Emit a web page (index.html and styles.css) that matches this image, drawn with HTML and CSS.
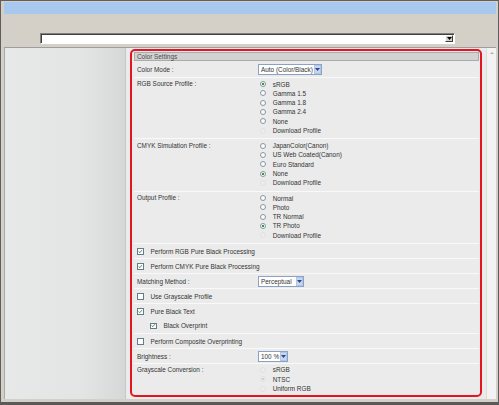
FILE: index.html
```html
<!DOCTYPE html>
<html>
<head>
<meta charset="utf-8">
<link rel="stylesheet" href="styles.css">
</head>
<body>
<div class="window">
  <div class="titlebar"></div>
  <div class="toolbar">
    <div class="bigselect"><span class="bigarrow"><svg width="5" height="3" viewBox="0 0 5 3"><path d="M0 0H5L2.5 3Z" fill="#000"/></svg></span></div>
  </div>
  <div class="main">
    <div class="side"></div>
    <div class="content">
      <div class="panel">
        <div class="panel-head">Color Settings</div>

        <div class="row first">
          <div class="label">Color Mode :</div>
          <div class="value"><span class="sel w64">Auto (Color/Black)<span class="sel-btn"><svg width="5" height="3" viewBox="0 0 5 3"><path d="M0 0H5L2.5 3Z" fill="#2b4a80"/></svg></span></span></div>
        </div>

        <div class="row group g6">
          <div class="label">RGB Source Profile :</div>
          <div class="value list">
            <div class="opt"><span class="rd on"></span>sRGB</div>
            <div class="opt"><span class="rd"></span>Gamma 1.5</div>
            <div class="opt"><span class="rd"></span>Gamma 1.8</div>
            <div class="opt"><span class="rd"></span>Gamma 2.4</div>
            <div class="opt"><span class="rd"></span>None</div>
            <div class="opt"><span class="rd off"></span>Download Profile</div>
          </div>
        </div>

        <div class="row group">
          <div class="label">CMYK Simulation Profile :</div>
          <div class="value list">
            <div class="opt"><span class="rd"></span>JapanColor(Canon)</div>
            <div class="opt"><span class="rd"></span>US Web Coated(Canon)</div>
            <div class="opt"><span class="rd"></span>Euro Standard</div>
            <div class="opt"><span class="rd on"></span>None</div>
            <div class="opt"><span class="rd off"></span>Download Profile</div>
          </div>
        </div>

        <div class="row group">
          <div class="label">Output Profile :</div>
          <div class="value list">
            <div class="opt"><span class="rd"></span>Normal</div>
            <div class="opt"><span class="rd"></span>Photo</div>
            <div class="opt"><span class="rd"></span>TR Normal</div>
            <div class="opt"><span class="rd on"></span>TR Photo</div>
            <div class="opt"><span class="rd off"></span>Download Profile</div>
          </div>
        </div>

        <div class="row single">
          <span class="cb"><svg width="5" height="5" viewBox="0 0 5 5"><path d="M0.6 2.4L2 3.8L4.4 1" fill="none" stroke="#2f9a3c" stroke-width="1.1"/></svg></span>Perform RGB Pure Black Processing
        </div>

        <div class="row single">
          <span class="cb"><svg width="5" height="5" viewBox="0 0 5 5"><path d="M0.6 2.4L2 3.8L4.4 1" fill="none" stroke="#2f9a3c" stroke-width="1.1"/></svg></span>Perform CMYK Pure Black Processing
        </div>

        <div class="row single">
          <div class="label">Matching Method :</div>
          <div class="value"><span class="sel w46">Perceptual<span class="sel-btn"><svg width="5" height="3" viewBox="0 0 5 3"><path d="M0 0H5L2.5 3Z" fill="#2b4a80"/></svg></span></span></div>
        </div>

        <div class="row single">
          <span class="cb"></span>Use Grayscale Profile
        </div>

        <div class="row double">
          <div class="line a"><span class="cb"><svg width="5" height="5" viewBox="0 0 5 5"><path d="M0.6 2.4L2 3.8L4.4 1" fill="none" stroke="#2f9a3c" stroke-width="1.1"/></svg></span>Pure Black Text</div>
          <div class="line b sub"><span class="cb"><svg width="5" height="5" viewBox="0 0 5 5"><path d="M0.6 2.4L2 3.8L4.4 1" fill="none" stroke="#2f9a3c" stroke-width="1.1"/></svg></span>Black Overprint</div>
        </div>

        <div class="row single">
          <span class="cb"></span>Perform Composite Overprinting
        </div>

        <div class="row single">
          <div class="label">Brightness :</div>
          <div class="value"><span class="sel w30">100 %<span class="sel-btn"><svg width="5" height="3" viewBox="0 0 5 3"><path d="M0 0H5L2.5 3Z" fill="#2b4a80"/></svg></span></span></div>
        </div>

        <div class="row group g3">
          <div class="label">Grayscale Conversion :</div>
          <div class="value list">
            <div class="opt"><span class="rd off"></span>sRGB</div>
            <div class="opt"><span class="rd off on-off"></span>NTSC</div>
            <div class="opt"><span class="rd off"></span>Uniform RGB</div>
          </div>
        </div>
      </div>
    </div>
    <div class="scroll"><span class="uparrow"></span></div>
  </div>
</div>
</body>
</html>
```

FILE: styles.css
```css
html, body {
  margin: 0;
  padding: 0;
  background: #d4d0c8;
}
.window {
  width: 499px;
  height: 405px;
  box-sizing: border-box;
  border: 1px solid #5e5e5e;
  border-bottom: 3px solid #5a5a5a;
  padding: 1px 2px 3px 3px;
  background: #d4d0c8;
  font-family: "Liberation Sans", Arial, sans-serif;
  font-size: 6.4px;
  color: #333;
  display: flex;
  flex-direction: column;
}
.titlebar {
  height: 12px;
  background: #a8c8ee;
}
.toolbar {
  height: 33px;
  box-sizing: border-box;
  padding-top: 19px;
  padding-left: 36px;
}
.bigselect {
  width: 415px;
  height: 11px;
  box-sizing: border-box;
  background: #fff;
  border-top: 1px solid #808080;
  border-left: 1px solid #808080;
  border-right: 1px solid #ffffff;
  border-bottom: 1px solid #ffffff;
  box-shadow: inset 1px 1px 0 #404040;
  display: flex;
  justify-content: flex-end;
  align-items: stretch;
  padding: 1px;
}
.bigarrow {
  width: 8px;
  box-sizing: border-box;
  background: #d4d0c8;
  border-top: 1px solid #fff;
  border-left: 1px solid #fff;
  border-right: 1px solid #404040;
  border-bottom: 1px solid #404040;
  display: flex;
  align-items: center;
  justify-content: center;
}
.main {
  height: 352px;
  box-sizing: border-box;
  border-top: 1px solid #9e9e9e;
  display: flex;
}
.side {
  width: 121px;
  box-sizing: border-box;
  border-left: 1px solid #a9a9a9;
  border-right: 1px solid #c6c6c6;
  background: linear-gradient(to right, #e7e8e8 0%, #e3e4e4 65%, #d6d8d8 100%);
  flex: none;
  width: 122px;
}
.content {
  width: 360px;
  flex: none;
  box-sizing: border-box;
  background: #ebebeb;
  padding: 1px 4px 2px 4px;
}
.scroll {
  width: 10px;
  flex: none;
  box-sizing: border-box;
  background: #f3f3f3;
  border-left: 1px solid #dcdcdc;
  display: flex;
  justify-content: center;
  padding-top: 4px;
}
.uparrow {
  width: 0;
  height: 0;
  border-left: 2px solid transparent;
  border-right: 2px solid transparent;
  border-bottom: 2px solid #b0b0b0;
}
.panel {
  height: 348px;
  box-sizing: border-box;
  border: 2px solid #e5141f;
  border-radius: 5px;
  padding: 1px 1px 0 2px;
  overflow: hidden;
}
.panel-head {
  height: 9px;
  box-sizing: border-box;
  border: 1px solid #ababab;
  background: #d2d2d2;
  color: #4a4a4a;
  padding-left: 2px;
  line-height: 7px;
}
.row {
  display: flex;
  align-items: center;
  box-sizing: border-box;
  border-top: 1px solid #f9f9f9;
  padding-left: 3px;
}
.row.first {
  border-top: none;
  height: 16px;
  padding-top: 1px;
}
.row.single {
  height: 15px;
}
.row.group {
  align-items: flex-start;
  padding-top: 1.5px;
  padding-bottom: 3.5px;
}
.row.g6 {
  padding-top: 1.4px;
  padding-bottom: 3.3px;
}
.row.g3 {
  padding-top: 0.9px;
  padding-bottom: 0;
}
.row.group .label {
  line-height: 9.3px;
}
.row.double {
  flex-direction: column;
  align-items: stretch;
  height: 30px;
}
.line {
  display: flex;
  align-items: center;
}
.line.a { height: 14px; }
.line.b { height: 15px; }
.line.sub { padding-left: 13px; }
.label {
  width: 121px;
  flex: none;
}
.value {
  display: flex;
  align-items: center;
}
.value.list {
  flex-direction: column;
  align-items: flex-start;
}
.opt {
  height: 9.3px;
  display: flex;
  align-items: center;
}
.rd {
  width: 6px;
  height: 6px;
  box-sizing: border-box;
  border-radius: 50%;
  border: 1px solid #8797a3;
  background: #fbfbfb;
  margin-left: 1.7px;
  margin-right: 7px;
  flex: none;
}
.rd.on {
  background: radial-gradient(circle, #2e9c3e 0 1.1px, #fbfbfb 1.5px);
}
.rd.off {
  border-color: #e0e0e0;
  background: #ededed;
}
.rd.on-off {
  background: radial-gradient(circle, #cfcfcf 0 1px, #ededed 1.4px);
}
.cb {
  width: 6.5px;
  height: 6.5px;
  box-sizing: border-box;
  border: 1px solid #68798b;
  background: #fff;
  margin-right: 7px;
  flex: none;
  display: flex;
  align-items: center;
  justify-content: center;
}
.cb svg {
  display: block;
}
.sel {
  height: 11px;
  box-sizing: border-box;
  border: 1px solid #8aa2c4;
  background: #fff;
  display: flex;
  align-items: center;
  padding-left: 2px;
  white-space: nowrap;
  color: #333;
}
.w64 { width: 64px; }
.w46 { width: 46px; }
.w30 { width: 30px; }
.sel-btn {
  margin-left: auto;
  width: 7px;
  height: 9px;
  box-sizing: border-box;
  background: #c6d5f1;
  border: 1px solid #b3c6e8;
  display: flex;
  align-items: center;
  justify-content: center;
}
.sel-btn svg { display: block; }
```
